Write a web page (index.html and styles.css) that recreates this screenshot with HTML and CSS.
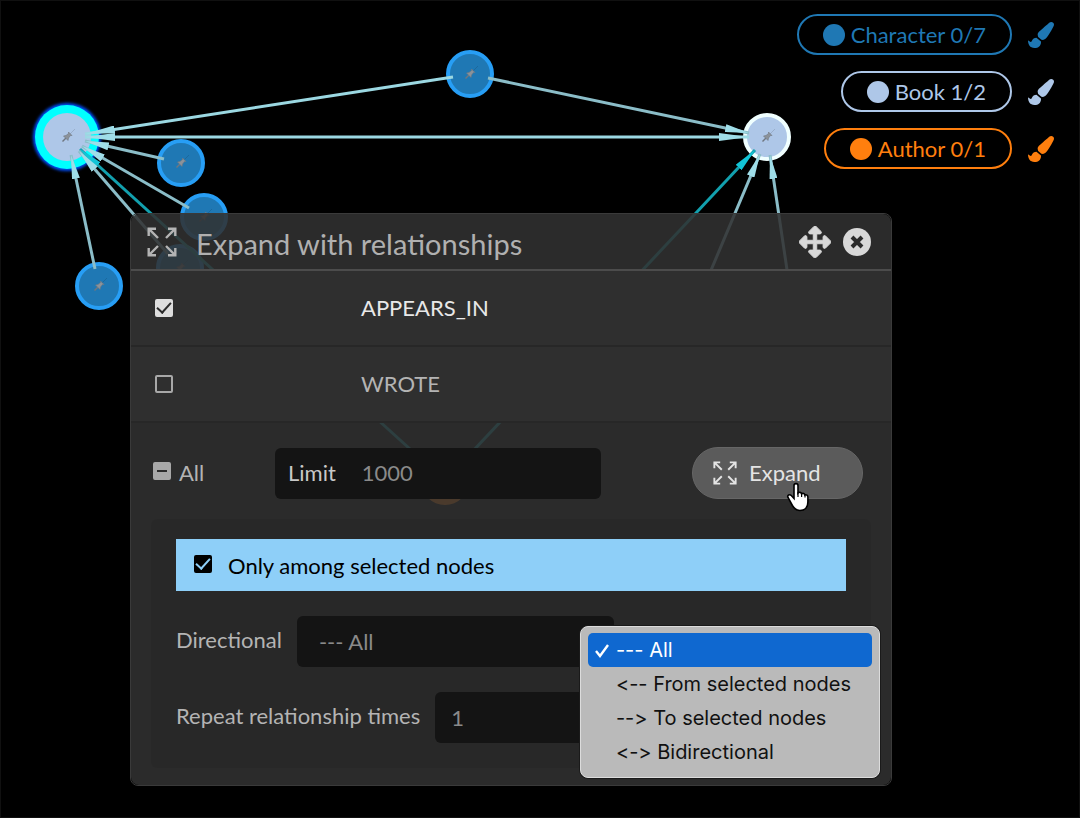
FILE: index.html
```
<!DOCTYPE html>
<html lang="en">
<head>
  <meta charset="UTF-8" />
  <meta name="viewport" content="width=device-width, initial-scale=1" />
  <title>Expand with relationships</title>
  <link rel="stylesheet" href="styles.css">
</head>
<body>

  <!-- shared icons -->
  <svg class="sprite" aria-hidden="true">
    <symbol id="icon-brush" viewBox="0 0 512 512">
      <path d="M167.02 309.34c-40.12 2.58-76.53 17.86-97.19 72.3-2.35 6.21-8 9.98-14.59 9.98-11.11 0-45.46-27.67-55.25-34.35C0 439.62 37.93 512 128 512c75.86 0 128-43.77 128-120.19 0-3.11-.65-6.08-.97-9.13l-88.01-73.34zM457.89 0c-15.16 0-29.37 6.71-40.21 16.45C213.27 199.05 192 203.34 192 257.09c0 13.7 3.25 26.76 8.73 38.7l63.82 53.18c7.21 1.8 14.64 3.03 22.39 3.03 62.11 0 98.11-45.45 211.16-256.46 7.38-14.35 13.9-29.85 13.9-45.99C512 20.64 486 0 457.89 0z" fill="currentColor"/>
    </symbol>
    <symbol id="icon-expand" viewBox="0 0 30 30">
      <g fill="none" stroke="currentColor" stroke-width="2.4">
        <path d="M1.700 9V1.700H9M1.700 1.700L11 11"/>
        <path d="M21 1.700h7.300V9M28.300 1.700L19 11"/>
        <path d="M1.700 21v7.300H9M1.700 28.300L11 19"/>
        <path d="M21 28.300h7.300V21M28.300 28.300L19 19"/>
      </g>
    </symbol>
    <symbol id="icon-move" viewBox="0 0 512 512">
      <path d="M352.201 425.775l-79.196 79.196c-9.373 9.373-24.568 9.373-33.941 0l-79.196-79.196c-15.119-15.119-4.411-40.971 16.971-40.97h51.162L228 284H127.196v51.162c0 21.382-25.851 32.09-40.971 16.971L7.029 272.937c-9.373-9.373-9.373-24.569 0-33.941L86.225 159.8c15.119-15.119 40.971-4.411 40.971 16.971V228H228V127.196h-51.23c-21.382 0-32.09-25.851-16.971-40.971l79.196-79.196c9.373-9.373 24.568-9.373 33.941 0l79.196 79.196c15.119 15.119 4.411 40.971-16.971 40.971h-51.162V228h100.804v-51.162c0-21.382 25.851-32.09 40.97-16.971l79.196 79.196c9.373 9.373 9.373 24.569 0 33.941L425.773 352.2c-15.119 15.119-40.971 4.411-40.97-16.971V284H284v100.804h51.23c21.382 0 32.09 25.851 16.971 40.971z" fill="currentColor" stroke="currentColor" stroke-width="14"/>
    </symbol>
    <symbol id="icon-close" viewBox="0 0 28 28">
      <circle cx="14" cy="14" r="14" fill="currentColor"/>
      <path d="M9 9l10 10M19 9l-10 10" stroke="#2b2b2b" stroke-width="4"/>
    </symbol>
    <symbol id="icon-pin" viewBox="-8 -8 16 16">
      <path d="M0 0L8-8" stroke="#000" stroke-opacity=".12"/>
      <path d="M-4.500 4.500L-1 1" stroke="#6f7780" stroke-width="1.500"/>
      <path d="M-3.500-1L-1-1.500 1.500-3.500 1.500-5 5-1.500H3.500L1.500 1 1 3.500z" fill="#8b929a" stroke="#6f7780" stroke-width=".6"/>
    </symbol>
  </svg>

  <main class="app">

    <svg class="graph" aria-hidden="true">
      <defs>
        <marker id="arrow" markerUnits="userSpaceOnUse" markerWidth="24" markerHeight="8" refX="24" refY="4" orient="auto">
          <path d="M0 0L24 4 0 8z" fill="#9fdde8"/>
        </marker>
        <marker id="arrow-teal" markerUnits="userSpaceOnUse" markerWidth="24" markerHeight="8" refX="24" refY="4" orient="auto">
          <path d="M0 0L24 4 0 8z" fill="#12c4d6"/>
        </marker>
        <marker id="arrow-big" markerUnits="userSpaceOnUse" markerWidth="30" markerHeight="8" refX="30" refY="4" orient="auto-start-reverse">
          <path d="M0 0L30 4 0 8z" fill="#9fdde8"/>
        </marker>
        <filter id="glow" x="-30%" y="-30%" width="160%" height="160%">
          <feGaussianBlur stdDeviation="1.5"/>
        </filter>
      </defs>

      <g class="nodes">
        <circle cx="67" cy="137" r="34" fill="#0050ff" filter="url(#glow)"/>
        <circle cx="67" cy="137" r="32" fill="#00ffff"/>
        <circle class="book selected" cx="67" cy="137" r="24"/>
        <circle class="book" cx="767" cy="137" r="22"/>
        <circle class="character" cx="470" cy="74" r="22"/>
        <circle class="character" cx="181" cy="163" r="22"/>
        <circle class="character" cx="204" cy="217" r="22"/>
        <circle class="character" cx="180" cy="268" r="22"/>
        <circle class="character" cx="99" cy="286" r="22"/>
        <circle class="author" cx="445" cy="481" r="24"/>
      </g>

      <g class="pins">
        <use href="#icon-pin" x="59" y="129" width="16" height="16"/>
        <use href="#icon-pin" x="759" y="129" width="16" height="16"/>
        <use href="#icon-pin" x="462" y="66" width="16" height="16"/>
        <use href="#icon-pin" x="173" y="155" width="16" height="16"/>
        <use href="#icon-pin" x="196" y="209" width="16" height="16"/>
        <use href="#icon-pin" x="172" y="260" width="16" height="16"/>
        <use href="#icon-pin" x="91" y="278" width="16" height="16"/>
      </g>

      <g class="edges">
        <path class="wrote" d="M432 469L80 149"/>
        <path class="wrote" d="M457 468L755 150"/>
        <path class="appears" d="M164 159L85 141"/>
        <path class="appears" d="M189 208L82 146"/>
        <path class="appears" d="M168 254L79 151"/>
        <path class="appears" d="M95 269L71 155"/>
        <path class="appears" d="M488 78L749 133"/>
        <path class="appears" d="M690 320L760 154"/>
        <path class="appears" d="M790 290L770 155"/>
        <path class="bright" d="M453 77L85 134"/>
        <path class="bright both" d="M85 137H749"/>
      </g>
    </svg>

    <div class="legend">
      <div class="legend-row character-color">
        <button class="pill"><span class="dot"></span>Character 0/7</button>
        <button class="icon-button" aria-label="Style Character"><svg class="brush"><use href="#icon-brush"/></svg></button>
      </div>
      <div class="legend-row book-color">
        <button class="pill"><span class="dot"></span>Book 1/2</button>
        <button class="icon-button" aria-label="Style Book"><svg class="brush"><use href="#icon-brush"/></svg></button>
      </div>
      <div class="legend-row author-color">
        <button class="pill"><span class="dot"></span>Author 0/1</button>
        <button class="icon-button" aria-label="Style Author"><svg class="brush"><use href="#icon-brush"/></svg></button>
      </div>
    </div>

    <section class="panel">
      <header class="panel-header">
        <svg class="title-icon"><use href="#icon-expand"/></svg>
        <h1>Expand with relationships</h1>
        <button class="icon-button" aria-label="Move"><svg class="move"><use href="#icon-move"/></svg></button>
        <button class="icon-button" aria-label="Close"><svg class="close"><use href="#icon-close"/></svg></button>
      </header>

      <label class="rel-row checked"><input type="checkbox" class="check" checked><span>APPEARS_IN</span></label>
      <label class="rel-row"><input type="checkbox" class="check"><span>WROTE</span></label>

      <div class="panel-footer">
        <div class="actions">
          <label class="all"><input type="checkbox" class="check" id="all"><span>All</span></label>
          <label class="limit field"><span>Limit</span><input type="text" value="1000"></label>
          <div class="expand-wrap">
            <button class="expand"><svg class="expand-icon"><use href="#icon-expand"/></svg>Expand</button>
            <svg class="cursor" viewBox="0 0 24 30" aria-hidden="true">
              <path d="M8 3.500C8 1 12 1 12 3.500V11c1-1.200 3.300-.8 3.600.8 1.200-.9 3-.3 3.300 1.200 1.500-.6 3 .3 3 2.200V20c0 5-3 8.500-8 8.500-4.500 0-6-2.500-7.500-5L2 15.500c-1-2.200 1.500-3.700 3.300-2L8 16.500z" fill="#fff" stroke="#000" stroke-width="1.600"/>
              <path d="M12 10v5M15.600 11.500V15M19 13v2.500" stroke="#000" stroke-width="1.200"/>
            </svg>
          </div>
        </div>

        <div class="options">
          <label class="among"><input type="checkbox" class="check dark" checked><span>Only among selected nodes</span></label>

          <div class="option-row">
            <label for="direction">Directional</label>
            <div class="select-wrap">
              <select id="direction" class="field">
                <option>--- All</option>
                <option>&lt;-- From selected nodes</option>
                <option>--&gt; To selected nodes</option>
                <option>&lt;-&gt; Bidirectional</option>
              </select>
              <ul class="menu" role="listbox" aria-label="Directional">
                <li class="active" role="option" aria-selected="true"><svg viewBox="0 0 16 16"><path d="M2 9l4 5 8-11"/></svg>--- All</li>
                <li role="option">&lt;-- From selected nodes</li>
                <li role="option">--&gt; To selected nodes</li>
                <li role="option">&lt;-&gt; Bidirectional</li>
              </ul>
            </div>
          </div>

          <div class="option-row">
            <label for="repeat">Repeat relationship times</label>
            <input type="text" id="repeat" class="field" value="1">
          </div>
        </div>
      </div>
    </section>

  </main>

  <script>
    // only some of the relationships are ticked
    document.getElementById("all").indeterminate = true;
  </script>

</body>
</html>
```
FILE: styles.css
```
* {
  box-sizing: border-box;
}

html, body {
  margin: 0;
  padding: 0;
  background: #000;
  color: #b4b4b4;
  font-family: Lato, sans-serif;
  font-size: 22px;
  line-height: 28px;
}

button, input, select {
  font: inherit;
  color: inherit;
  margin: 0;
}

button {
  cursor: pointer;
}

.sprite {
  position: absolute;
  width: 0;
  height: 0;
}

.app {
  position: relative;
  min-height: 100vh;
  padding-bottom: 32px;
  box-shadow: inset 0 0 0 1px #101010;
  overflow: hidden;
}

/* graph */
.graph {
  position: absolute;
  inset: 0;
  width: 100%;
  height: 100%;
}

.character {
  fill: #1f78b4;
  stroke: #279ef5;
  stroke-width: 4;
}

.book {
  fill: #aec7e8;
  stroke: #f0ffff;
  stroke-width: 4;
}

.book.selected {
  stroke: none;
}

.author {
  fill: #ff7f0e;
}

.edges path {
  fill: none;
  stroke-width: 3;
}

.edges .appears {
  stroke: #8bbdc8;
  marker-end: url(#arrow);
}

.edges .bright {
  stroke: #9bd8e2;
  marker-end: url(#arrow-big);
}

.edges .both {
  marker-start: url(#arrow-big);
}

.edges .wrote {
  stroke: #12a0ae;
  marker-end: url(#arrow-teal);
}

/* legend */
.legend {
  position: relative;
  display: flex;
  flex-direction: column;
  align-items: flex-end;
  gap: 16px;
  padding: 14px 26px 0 0;
}

.legend-row {
  display: flex;
  align-items: center;
  gap: 16px;
}

.character-color { color: #1f78b4; }
.book-color { color: #aec7e8; }
.author-color { color: #ff7f0e; }

.pill {
  display: flex;
  align-items: center;
  gap: 6px;
  height: 41px;
  padding: 0 24px;
  border: 2px solid currentColor;
  border-radius: 21px;
  background: transparent;
}

.dot {
  width: 22px;
  height: 22px;
  border-radius: 50%;
  background: currentColor;
}

.icon-button {
  display: flex;
  padding: 0;
  border: none;
  background: none;
}

.brush {
  width: 26px;
  height: 26px;
}

/* panel */
.panel {
  position: relative;
  margin: 44px 188px 0 130px;
  border: 1px solid #3a3a3a;
  border-radius: 8px;
}

.panel-header {
  display: flex;
  align-items: center;
  gap: 12px;
  height: 57px;
  padding: 0 20px 0 16px;
  border-bottom: 2px solid #4c4c4c;
  border-radius: 8px 8px 0 0;
  background: rgba(49, 49, 49, 0.88);
  color: #d8d8d8;
}

.panel-header h1 {
  flex: 1;
  margin: 0;
  padding: 4px 0 0 7px;
  font-size: 29px;
  line-height: 34px;
  font-weight: normal;
  color: #b0b0b0;
}

.title-icon {
  width: 30px;
  height: 30px;
  color: #b4b4b4;
}

.move {
  width: 32px;
  height: 32px;
}

.close {
  width: 28px;
  height: 28px;
}

.rel-row {
  display: flex;
  align-items: center;
  gap: 188px;
  height: 76px;
  padding: 0 24px;
  border-bottom: 2px solid #272727;
  background: #2f2f2f;
}

.rel-row.checked {
  color: #e8e8e8;
}

.check {
  appearance: none;
  flex: none;
  display: grid;
  place-items: center;
  width: 18px;
  height: 18px;
  border: 2px solid #a8a8a8;
  border-radius: 2px;
  color: #2b2b2b;
}

.check:checked {
  border-color: #dedede;
  background: #dedede;
}

.check:indeterminate {
  background: #a8a8a8;
}

.check.dark {
  border-color: #000;
  background: #000;
  color: #8ecff8;
}

.check:checked::after {
  content: "";
  width: 6px;
  height: 12px;
  border: solid currentColor;
  border-width: 0 2px 2px 0;
  transform: translateY(-2px) rotate(42deg);
}

.check:indeterminate::after {
  content: "";
  width: 10px;
  height: 2px;
  background: currentColor;
}

.panel-footer {
  padding: 24px 20px 17px;
  border-radius: 0 0 8px 8px;
  background: rgba(49, 49, 49, 0.88);
}

.actions {
  display: flex;
  align-items: center;
  padding: 0 8px 0 2px;
}

.all {
  display: flex;
  align-items: center;
  gap: 8px;
  width: 122px;
}

.all .check,
.among .check {
  margin-bottom: 4px;
}

.field {
  height: 51px;
  border: none;
  border-radius: 6px;
  background: #141414;
  outline: none;
}

.limit {
  display: flex;
  align-items: center;
  gap: 26px;
  width: 326px;
  padding: 0 13px;
  color: #c8c8c8;
}

.limit input {
  flex: 1;
  min-width: 0;
  padding: 0;
  border: none;
  background: none;
  color: #8a8a8a;
}

.expand-wrap {
  position: relative;
  margin-left: auto;
}

.expand {
  display: flex;
  align-items: center;
  gap: 12px;
  width: 171px;
  height: 52px;
  padding: 0 20px;
  border: 1px solid #666;
  border-radius: 26px;
  background: #5b5b5b;
  color: #e4e4e4;
}

.expand-icon {
  width: 24px;
  height: 24px;
}

.cursor {
  position: absolute;
  left: 94px;
  top: 35px;
  width: 24px;
  height: 30px;
  fill: none;
}

.options {
  display: flex;
  flex-direction: column;
  gap: 25px;
  margin-top: 20px;
  padding: 20px 25px 25px;
  border-radius: 6px;
  background: rgba(0, 0, 0, 0.05);
}

.among {
  display: flex;
  align-items: center;
  gap: 16px;
  height: 52px;
  padding: 2px 18px 0;
  background: #8ecff8;
  color: #000;
}

.option-row {
  display: flex;
  align-items: center;
  gap: 15px;
}

.option-row label {
  padding-bottom: 4px;
}

.select-wrap {
  position: relative;
}

.select-wrap .field {
  appearance: none;
  width: 317px;
  padding: 0 22px;
  color: #8a8a8a;
}

.option-row input {
  width: 170px;
  padding: 0 16px;
  color: #8a8a8a;
}

/* open drop-down */
.menu {
  position: absolute;
  left: 283px;
  top: 10px;
  z-index: 1;
  width: 300px;
  margin: 0;
  padding: 6px 7px 8px;
  list-style: none;
  border: 1px solid #dcdcdc;
  border-radius: 8px;
  background: #bababa;
  box-shadow: 0 0 0 1px #1a1a1a;
  color: #111;
  font-family: Inter, sans-serif;
  font-size: 20px;
  font-variant-ligatures: none;
}

.menu li {
  display: flex;
  align-items: center;
  height: 34px;
  padding-left: 28px;
  border-radius: 5px;
  white-space: pre;
}

.menu .active {
  gap: 6px;
  padding-left: 6px;
  background: #0f68d0;
  color: #fff;
}

.menu svg {
  width: 16px;
  height: 16px;
  fill: none;
  stroke: #fff;
  stroke-width: 2.400;
}
```
